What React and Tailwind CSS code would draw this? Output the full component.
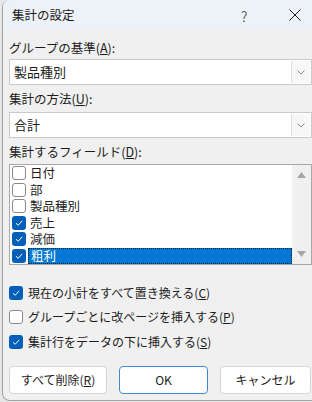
import React from "react";

const font = { fontFamily: '"Noto Sans CJK JP", "Noto Sans", sans-serif' };

const Check = () => (
  <svg width="10" height="10" viewBox="0 0 10 10" fill="none">
    <path d="M2 5.2 L4.2 7.3 L8.2 2.8" stroke="white" strokeWidth="1" />
  </svg>
);

const Box = ({ checked }) =>
  checked ? (
    <div className="w-[14px] h-[14px] shrink-0 rounded-[3px] bg-[#005fb8] flex items-center justify-center">
      <Check />
    </div>
  ) : (
    <div className="w-[14px] h-[14px] shrink-0 rounded-[3px] border border-[#8a8a8a] bg-white" />
  );

const Label = ({ pre, k, className }) => (
  <div className={"h-[16px] leading-[16px] text-[12.5px] text-[#1b1b1b] " + className}>
    {pre}(<span className="underline">{k}</span>):
  </div>
);

const Combo = ({ value, className }) => (
  <div className={"h-[26px] flex items-center bg-white border border-[#c9c9c9] " + className}>
    <div className="flex-1 pl-[4px] text-[13px] text-[#1b1b1b]">{value}</div>
    <div className="w-[19px] h-[22px] mr-[1px] bg-[#f7f7f7] border-l border-[#dedede] flex items-center justify-center">
      <svg width="8" height="5" viewBox="0 0 8 5" fill="none">
        <path d="M0.5 0.5 L4 4 L7.5 0.5" stroke="#8a8a8a" strokeWidth="1" />
      </svg>
    </div>
  </div>
);

const fields = [
  { name: "日付", on: false },
  { name: "部", on: false },
  { name: "製品種別", on: false },
  { name: "売上", on: true },
  { name: "減価", on: true },
  { name: "粗利", on: true, sel: true },
];

const Option = ({ checked, text, k, className }) => (
  <div className={"h-[16px] leading-[16px] flex items-center gap-[5px] text-[12px] text-[#1b1b1b] " + className}>
    <Box checked={checked} />
    <span>
      {text}(<span className="underline">{k}</span>)
    </span>
  </div>
);

export default function App() {
  return (
    <div className="w-[312px] h-[402px] overflow-hidden bg-[#e6e6e6]" style={font}>
      <div className="ml-[2px] w-[318px] h-[401px] rounded-l-[8px] border-l border-b border-[#a3a3a3] bg-[#f0f0f0] overflow-hidden">
        <div className="h-[30px] bg-[#edf1f8] flex items-center relative">
          <span className="ml-[9px] text-[12.5px] text-[#1b1b1b]">集計の設定</span>
          <span className="absolute left-[238px] top-[6px] text-[14px] font-light text-[#1b1b1b]">?</span>
          <svg className="absolute left-[286px] top-[9px]" width="12" height="12" viewBox="0 0 12 12">
            <path d="M0.5 0.5 L11.5 11.5 M11.5 0.5 L0.5 11.5" stroke="#1b1b1b" strokeWidth="1" />
          </svg>
        </div>

        <div className="pl-[6px] pr-[8px] pt-[10px]">
          <Label pre="グループの基準" k="A" />
          <Combo value="製品種別" className="mt-[3px]" />
          <Label pre="集計の方法" k="U" className="mt-[6px]" />
          <Combo value="合計" className="mt-[5px]" />
          <Label pre="集計するフィールド" k="D" className="mt-[6px]" />

          <div className="mt-[4px] h-[101px] bg-white border border-[#a8a8a8] flex">
            <div className="flex-1">
              {fields.map((f) => (
                <div key={f.name} className="h-[16.5px] flex items-center pl-[2px]">
                  <Box checked={f.on} />
                  <div
                    className={
                      "flex-1 h-full ml-[2px] pl-[2px] flex items-center text-[12.5px] leading-[14px] " +
                      (f.sel
                        ? "bg-[#0078d7] text-white border border-dotted border-[#222]"
                        : "text-[#1b1b1b]")
                    }
                  >
                    {f.name}
                  </div>
                </div>
              ))}
            </div>
            <div className="w-[19px] bg-[#f0f0f0] flex flex-col items-center justify-between py-[7px]">
              <svg width="9" height="6" viewBox="0 0 9 6">
                <path d="M4.5 0 L9 6 L0 6 Z" fill="#a6a6a6" />
              </svg>
              <svg width="9" height="6" viewBox="0 0 9 6">
                <path d="M0 0 L9 0 L4.5 6 Z" fill="#a6a6a6" />
              </svg>
            </div>
          </div>

          <Option checked text="現在の小計をすべて置き換える" k="C" className="mt-[20px]" />
          <Option checked={false} text="グループごとに改ページを挿入する" k="P" className="mt-[8px]" />
          <Option checked text="集計行をデータの下に挿入する" k="S" className="mt-[9px]" />

          <div className="mt-[16px] flex gap-[12px] text-[12px] text-[#1b1b1b]">
            <button className="w-[98px] h-[28px] bg-white border border-[#d3d3d3] rounded-[4px]">
              すべて削除(<span className="underline">R</span>)
            </button>
            <button className="w-[89px] h-[28px] bg-white border border-[#3c8ad6] rounded-[4px]">
              OK
            </button>
            <button className="w-[91px] h-[28px] bg-white border border-[#d3d3d3] rounded-[4px]">
              キャンセル
            </button>
          </div>
        </div>
      </div>
    </div>
  );
}
